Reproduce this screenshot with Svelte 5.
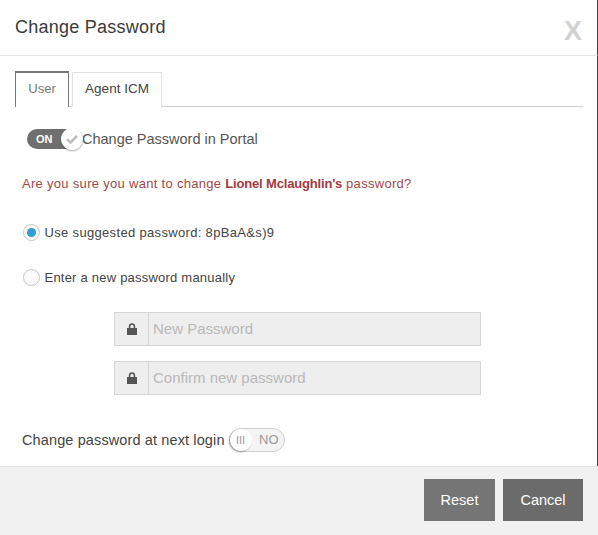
<script>
    let suggested = $state(true);
    let inPortal = $state(true);
    let nextLogin = $state(false);
    let activeTab = $state("User");
    const tabs = ["User", "Agent ICM"];
    const password = "8pBaA&s)9";
    const fields = ["New Password", "Confirm new password"];
</script>

<div class="modal">
    <header class="head">
        <h1>Change Password</h1>
        <button class="close" aria-label="Close">X</button>
    </header>

    <section class="body">
        <div class="tabs">
            {#each tabs as tab}
                <button class="tab" class:active={activeTab === tab} onclick={() => (activeTab = tab)}>{tab}</button>
            {/each}
        </div>

        <div class="portal-row">
            <button class="switch on" aria-label="Toggle portal" onclick={() => (inPortal = !inPortal)}>
                <span class="switch-text">ON</span>
                <span class="knob">
                    <svg width="14" height="12" viewBox="0 0 14 12">
                        <path d="M2 6.2 L5.6 9.4 L12 2.8" fill="none" stroke="#bdbdbd" stroke-width="2.6" />
                    </svg>
                </span>
            </button>
            <span>Change Password in Portal</span>
        </div>

        <p class="warning">Are you sure you want to change <strong>Lionel Mclaughlin's</strong> password?</p>

        <label class="radio first">
            <input type="radio" name="mode" checked={suggested} onchange={() => (suggested = true)} />
            <span class="dot"></span>
            Use suggested password: {password}
        </label>
        <label class="radio second">
            <input type="radio" name="mode" checked={!suggested} onchange={() => (suggested = false)} />
            <span class="dot"></span>
            Enter a new password manually
        </label>

        <div class="fields">
            {#each fields as field}
                <div class="field">
                    <span class="addon">
                        <svg width="10" height="12" viewBox="0 0 10 12">
                            <path d="M1.8 5.5 V3.4 a3.2 3.2 0 0 1 6.4 0 V5.5 M0 5 H10 V12 H0 Z" fill="#555" />
                            <path d="M3.4 5 V3.4 a1.6 1.6 0 0 1 3.2 0 V5 Z" fill="#eee" />
                        </svg>
                    </span>
                    <input type="password" placeholder={field} disabled />
                </div>
            {/each}
        </div>

        <div class="login-row">
            <span>Change password at next login</span>
            <button class="switch off" aria-label="Toggle next login" onclick={() => (nextLogin = !nextLogin)}>
                <span class="knob">III</span>
                <span class="switch-text">NO</span>
            </button>
        </div>
    </section>

    <footer class="foot">
        <button class="btn reset">Reset</button>
        <button class="btn cancel">Cancel</button>
    </footer>
</div>

<style>
    :global(body) {
        margin: 0;
        background: #fff;
    }
    .modal {
        width: 598px;
        height: 535px;
        box-sizing: border-box;
        display: flex;
        flex-direction: column;
        font-family: "Liberation Sans", Arial, sans-serif;
        color: #444;
        overflow: hidden;
    }
    button {
        font-family: inherit;
        padding: 0;
    }
    .head {
        height: 56px;
        box-sizing: border-box;
        display: flex;
        justify-content: space-between;
        border-bottom: 1px solid #e4e4e4;
        border-right: 1px solid #444;
        padding: 0 15px;
    }
    h1 {
        margin: 17px 0 0;
        font-size: 18px;
        line-height: 20px;
        font-weight: 400;
        letter-spacing: 0.25px;
        color: #3a3a3a;
    }
    .close {
        border: 0;
        background: none;
        margin-top: 18px;
        width: 18px;
        height: 26px;
        color: #d2d2d2;
        font-size: 27px;
        font-weight: 700;
        line-height: 26px;
    }
    .body {
        flex: 1;
        box-sizing: border-box;
        padding: 15px 15px 0;
        border-right: 1px solid #444;
        font-size: 14px;
    }
    .tabs {
        display: flex;
        gap: 3px;
        height: 36px;
        box-sizing: border-box;
        border-bottom: 1px solid #cfcfcf;
        width: 568px;
    }
    .tab {
        height: 35px;
        box-sizing: border-box;
        margin-top: 1px;
        border: 1px solid #e2e2e2;
        border-bottom: 0;
        background: #fff;
        color: #444;
        font-size: 13.5px;
        width: 90px;
        padding-bottom: 4px;
    }
    .tab.active {
        margin-top: 0;
        width: 54px;
        height: 36px;
        border: 1px solid #777;
        border-top-width: 2px;
        border-bottom: 0;
        color: #777;
        font-size: 13px;
    }
    .portal-row {
        display: flex;
        align-items: center;
        margin: 21px 0 0 12px;
        height: 22px;
        color: #555;
        font-size: 14.5px;
    }
    .switch {
        position: relative;
        display: block;
        border-radius: 12px;
        box-sizing: border-box;
        font-size: 11px;
    }
    .switch.on {
        width: 56px;
        height: 20px;
        margin-right: -1px;
        border: 0;
        background: #6f6f6f;
        color: #fff;
        font-weight: 700;
    }
    .switch.on .switch-text {
        position: absolute;
        left: 9px;
        top: 3px;
        line-height: 14px;
    }
    .switch.on .knob {
        position: absolute;
        right: 0;
        top: -1px;
        width: 22px;
        height: 22px;
        border-radius: 50%;
        background: #fff;
        box-shadow: 0 1px 2px rgba(0, 0, 0, 0.35);
        display: grid;
        place-items: center;
    }
    .warning {
        margin: 24px 0 0 7px;
        height: 20px;
        font-size: 13px;
        line-height: 20px;
        letter-spacing: 0.3px;
        color: #a04a4a;
    }
    .warning strong {
        color: #a5393f;
        letter-spacing: -0.17px;
    }
    .radio {
        position: relative;
        display: flex;
        align-items: center;
        gap: 5px;
        margin-left: 8px;
        height: 20px;
        font-size: 13px;
        letter-spacing: 0.22px;
        color: #444;
    }
    .radio.first {
        margin-top: 28px;
        letter-spacing: 0.33px;
    }
    .radio.second {
        margin-top: 25px;
    }
    .radio input {
        position: absolute;
        opacity: 0;
        margin: 0;
    }
    .dot {
        width: 17px;
        height: 17px;
        margin-right: -0.5px;
        box-sizing: border-box;
        border: 1px solid #c6c6c6;
        border-radius: 50%;
        background: #fbfbfb;
        display: grid;
        place-items: center;
    }
    input:checked + .dot::after {
        content: "";
        width: 9px;
        height: 9px;
        border-radius: 50%;
        background: #2f9fd0;
    }
    .fields {
        display: flex;
        flex-direction: column;
        gap: 15px;
        margin: 25px 0 0 99px;
    }
    .field {
        display: flex;
        width: 367px;
        height: 34px;
        box-sizing: border-box;
        border: 1px solid #d4d4d4;
        background: #eeeeee;
    }
    .addon {
        width: 34px;
        box-sizing: border-box;
        border-right: 1px solid #d4d4d4;
        display: grid;
        place-items: center;
    }
    .field input {
        flex: 1;
        min-width: 0;
        border: 0;
        background: none;
        padding: 0 4px 2px;
        font-family: inherit;
        font-size: 15px;
    }
    .field input::placeholder {
        color: #b9b9b9;
        opacity: 1;
    }
    .login-row {
        display: flex;
        align-items: center;
        gap: 4px;
        margin: 33px 0 0 7px;
        height: 24px;
        font-size: 14.5px;
        letter-spacing: 0.12px;
        color: #444;
    }
    .switch.off {
        width: 56px;
        height: 24px;
        border: 1px solid #cfcfcf;
        background: #f4f4f4;
        color: #999;
        font-size: 13px;
    }
    .switch.off .knob {
        position: absolute;
        left: 0;
        top: 0;
        width: 22px;
        height: 22px;
        border-radius: 50%;
        background: #fff;
        box-shadow: -1px 1px 2px rgba(0, 0, 0, 0.35);
        font-size: 11px;
        line-height: 22px;
        text-align: center;
    }
    .switch.off .switch-text {
        position: absolute;
        right: 5px;
        top: 3px;
        line-height: 15px;
    }
    .foot {
        height: 69px;
        box-sizing: border-box;
        border-top: 1px solid #e4e4e4;
        background: #f1f1f1;
        display: flex;
        justify-content: flex-end;
        gap: 8px;
        padding: 12px 15px 0 0;
    }
    .btn {
        height: 42px;
        border: 0;
        color: #fff;
        font-size: 14.5px;
    }
    .reset {
        width: 71px;
        background: #757575;
    }
    .cancel {
        width: 80px;
        background: #6b6b6b;
    }
</style>
